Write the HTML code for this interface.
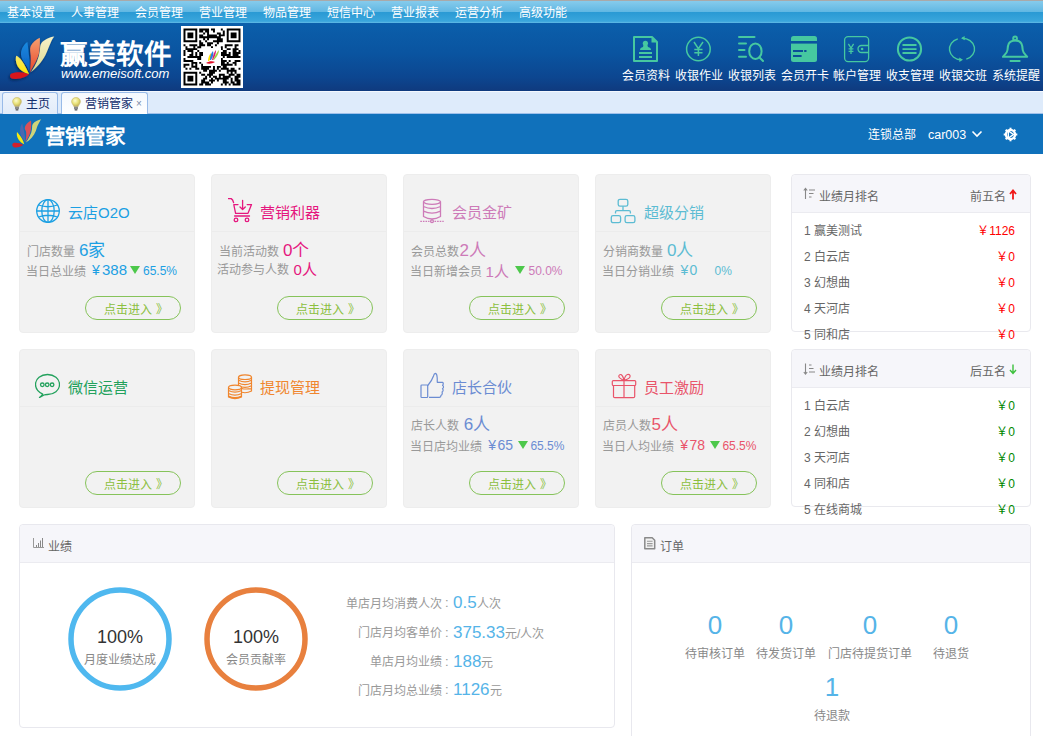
<!DOCTYPE html>
<html lang="zh-CN">
<head>
<meta charset="utf-8">
<style>
*{margin:0;padding:0;box-sizing:border-box}
html,body{width:1043px;height:736px;overflow:hidden;background:#fff;font-family:"Liberation Sans",sans-serif;position:relative}
.a{position:absolute;white-space:nowrap}
#topline{left:0;top:0;width:1043px;height:1px;background:#a9a9a9}
#nav{left:0;top:1px;width:1043px;height:22px;background:linear-gradient(#86cbec 0%,#62b8e3 48%,#2a9ad4 52%,#3aa6dc 92%,#63bce6 100%)}
#nav span{position:absolute;top:1px;line-height:22px;font-size:12px;color:#fff}
#hdr{left:0;top:23px;width:1043px;height:68px;background:linear-gradient(#0b5fab 0%,#0a54a0 45%,#0c4690 80%,#0f3a7e 100%)}
#tabs{left:0;top:91px;width:1043px;height:23px;background:#deebfb;border-top:1px solid #f4f8fe;border-bottom:1px solid #9fc0ea}
.tab{position:absolute;top:0px;height:22px;border:1px solid #99bbe8;border-bottom:none;border-radius:3px 3px 0 0;background:linear-gradient(#eef4fc,#e2ecf9)}
.tab.on{background:linear-gradient(#f4f8fe,#fff);height:23px}
.tab span{position:absolute;top:3px;line-height:16px;font-size:12px;color:#102c6c}
#bar{left:0;top:114px;width:1043px;height:40px;background:#1071bb}
.hi{position:absolute;top:0;width:53px;height:60px}
.hl{position:absolute;left:0;width:53px;text-align:center;font-size:12px;line-height:14px;top:45px;color:#fff}
.card{position:absolute;width:176px;height:159px;background:#f2f2f2;border:1px solid #ededed;border-radius:4px}
.card .sep{position:absolute;left:0;top:56px;width:174px;height:1px;background:#ececec}
.card .tt{position:absolute;left:48px;top:28px;line-height:20px;font-size:15px}
.card .ic{position:absolute;left:16px;top:24px;width:25px;height:25px}
.card .r1{position:absolute;left:8px;top:66px;line-height:20px;font-size:12px;color:#999}
.card .r2{position:absolute;left:8px;top:86px;line-height:20px;font-size:12px;color:#999}
.card i{font-style:normal;color:var(--c)}
.btn{position:absolute;left:65px;top:121px;width:96px;height:24px;border:1px solid #86c35a;border-radius:12px;font-size:12px;line-height:22px;padding-top:2px;padding-left:6px;color:#8cbf3f;text-align:center}
.rk{position:absolute;left:791px;width:240px;height:158px;border:1px solid #e9e9ee;border-radius:4px;overflow:visible;background:#fff}
.rk .h{position:absolute;left:0;top:0;width:238px;height:38px;background:#f6f6fa;border-bottom:1px solid #ebebf0;border-radius:4px 4px 0 0}
.rk .row{position:absolute;left:12px;width:211px;font-size:12px;line-height:16px;color:#666}
.rk .row b{font-weight:normal;position:absolute;right:0;top:0}
.pn{position:absolute;top:524px;border:1px solid #e8e8ee;border-radius:4px;background:#fff}
.pn .h{position:absolute;left:0;top:0;width:100%;height:38px;background:#f6f6fa;border-bottom:1px solid #ebebf0;border-radius:4px 4px 0 0}
</style>
</head>
<body>
<div class="a" id="topline"></div>
<div class="a" id="nav">
<span style="left:7px">基本设置</span>
<span style="left:71px">人事管理</span>
<span style="left:135px">会员管理</span>
<span style="left:199px">营业管理</span>
<span style="left:263px">物品管理</span>
<span style="left:327px">短信中心</span>
<span style="left:391px">营业报表</span>
<span style="left:455px">运营分析</span>
<span style="left:519px">高级功能</span>
</div>
<div class="a" id="hdr"></div>
<svg class="a" style="left:0;top:0" width="1043" height="91" viewBox="0 0 1043 91">
<defs>
<linearGradient id="gO" x1="0" y1="0" x2="0" y2="1"><stop offset="0" stop-color="#f5a070"/><stop offset="1" stop-color="#e8452a"/></linearGradient>
<linearGradient id="gB" x1="0" y1="0" x2="0" y2="1"><stop offset="0" stop-color="#1a8ae0"/><stop offset="1" stop-color="#0a5cc0"/></linearGradient>
<linearGradient id="gP" x1="0" y1="0" x2="0" y2="1"><stop offset="0" stop-color="#f6f2c8"/><stop offset="1" stop-color="#dcd890"/></linearGradient>
<linearGradient id="gY" x1="0" y1="0" x2="0" y2="1"><stop offset="0" stop-color="#f4e870"/><stop offset="1" stop-color="#ffe600"/></linearGradient>
<filter id="sh" x="-30%" y="-30%" width="160%" height="160%"><feDropShadow dx="-1" dy="1.5" stdDeviation="1.2" flood-color="#001a40" flood-opacity="0.7"/></filter>
</defs>
<g filter="url(#sh)">
<path d="M29 74.5 C25 72 17 71.5 11.5 73.5 C9.5 74.5 9.5 77.5 12 78.5 C17 80 25 77.5 29 74.5Z" fill="#d8141c"/>
<path d="M29 74 C27 70 24 63 20 58.5 C18.5 57 17 56 16.2 55.8 C15.5 58 15.5 62 17.5 66 C20 70.5 25 73 29 74Z" fill="url(#gY)"/>
<path d="M29.5 73 C29.5 68 30 62 29 56 C28.5 51 27.8 45 27.4 42 C24.5 44 21.5 48 21 53 C20.5 58 24 62 26.5 66 C28 68.5 29 71 29.5 73Z" fill="url(#gB)"/>
<path d="M30 72.5 C33 66 37.5 60 39 53 C40 47 40 41 39.8 37.8 C36 39.5 32.5 42.5 30.8 46 C29.5 49 30.5 52 30.8 56 C31 61 30.5 67 30 72.5Z" fill="url(#gO)"/>
<path d="M31 72 C36 68 42 62 45.5 55 C47.5 51 49 46 51 42 C52 39.5 53.3 37.5 54.3 36.4 C49.5 37 44 39.5 41.5 43 C40 45 40.2 48 39.8 51 C39 58 36 65 31 72Z" fill="url(#gP)"/>
</g>
<rect x="181" y="26" width="62" height="62" fill="#fff"/>
<g transform="translate(183.5 28.5) scale(1.965)"><path d="M0 0h7v1h-7zM8 0h5v1h-5zM14 0h2v1h-2zM19 0h1v1h-1zM22 0h7v1h-7zM0 1h1v1h-1zM6 1h1v1h-1zM8 1h2v1h-2zM11 1h2v1h-2zM15 1h1v1h-1zM20 1h1v1h-1zM22 1h1v1h-1zM28 1h1v1h-1zM0 2h1v1h-1zM2 2h3v1h-3zM6 2h1v1h-1zM10 2h1v1h-1zM12 2h1v1h-1zM17 2h2v1h-2zM20 2h1v1h-1zM22 2h1v1h-1zM24 2h3v1h-3zM28 2h1v1h-1zM0 3h1v1h-1zM2 3h3v1h-3zM6 3h1v1h-1zM8 3h2v1h-2zM12 3h5v1h-5zM18 3h3v1h-3zM22 3h1v1h-1zM24 3h3v1h-3zM28 3h1v1h-1zM0 4h1v1h-1zM2 4h3v1h-3zM6 4h1v1h-1zM8 4h11v1h-11zM22 4h1v1h-1zM24 4h3v1h-3zM28 4h1v1h-1zM0 5h1v1h-1zM6 5h1v1h-1zM10 5h1v1h-1zM12 5h1v1h-1zM17 5h3v1h-3zM22 5h1v1h-1zM28 5h1v1h-1zM0 6h7v1h-7zM8 6h1v1h-1zM11 6h1v1h-1zM15 6h5v1h-5zM22 6h7v1h-7zM8 7h2v1h-2zM12 7h3v1h-3zM17 7h1v1h-1zM0 8h1v1h-1zM3 8h4v1h-4zM8 8h3v1h-3zM12 8h2v1h-2zM16 8h1v1h-1zM21 8h4v1h-4zM26 8h2v1h-2zM1 9h1v1h-1zM5 9h1v1h-1zM7 9h2v1h-2zM14 9h1v1h-1zM19 9h1v1h-1zM21 9h1v1h-1zM26 9h1v1h-1zM1 10h6v1h-6zM19 10h1v1h-1zM22 10h2v1h-2zM25 10h3v1h-3zM0 11h1v1h-1zM2 11h3v1h-3zM7 11h1v1h-1zM20 11h2v1h-2zM25 11h2v1h-2zM28 11h1v1h-1zM0 12h1v1h-1zM4 12h1v1h-1zM6 12h1v1h-1zM8 12h2v1h-2zM19 12h3v1h-3zM23 12h1v1h-1zM25 12h4v1h-4zM0 13h1v1h-1zM3 13h2v1h-2zM6 13h1v1h-1zM8 13h2v1h-2zM19 13h5v1h-5zM25 13h3v1h-3zM2 14h7v1h-7zM20 14h1v1h-1zM22 14h7v1h-7zM0 15h1v1h-1zM7 15h2v1h-2zM19 15h1v1h-1zM0 16h5v1h-5zM19 16h3v1h-3zM23 16h1v1h-1zM26 16h3v1h-3zM4 17h3v1h-3zM8 17h1v1h-1zM19 17h2v1h-2zM22 17h1v1h-1zM25 17h2v1h-2zM0 18h3v1h-3zM4 18h1v1h-1zM6 18h1v1h-1zM9 18h1v1h-1zM19 18h6v1h-6zM26 18h1v1h-1zM0 19h1v1h-1zM4 19h3v1h-3zM9 19h5v1h-5zM15 19h1v1h-1zM17 19h2v1h-2zM20 19h2v1h-2zM1 20h1v1h-1zM3 20h1v1h-1zM6 20h2v1h-2zM9 20h4v1h-4zM15 20h1v1h-1zM17 20h1v1h-1zM19 20h4v1h-4zM24 20h2v1h-2zM28 20h1v1h-1zM10 21h2v1h-2zM13 21h4v1h-4zM18 21h1v1h-1zM22 21h5v1h-5zM0 22h7v1h-7zM8 22h1v1h-1zM13 22h3v1h-3zM22 22h1v1h-1zM24 22h1v1h-1zM26 22h1v1h-1zM0 23h1v1h-1zM6 23h1v1h-1zM9 23h2v1h-2zM12 23h3v1h-3zM18 23h3v1h-3zM23 23h3v1h-3zM27 23h2v1h-2zM0 24h1v1h-1zM2 24h3v1h-3zM6 24h1v1h-1zM11 24h1v1h-1zM13 24h1v1h-1zM15 24h2v1h-2zM18 24h1v1h-1zM20 24h4v1h-4zM26 24h3v1h-3zM0 25h1v1h-1zM2 25h3v1h-3zM6 25h1v1h-1zM10 25h2v1h-2zM14 25h1v1h-1zM16 25h7v1h-7zM24 25h1v1h-1zM26 25h2v1h-2zM0 26h1v1h-1zM2 26h3v1h-3zM6 26h1v1h-1zM9 26h2v1h-2zM13 26h3v1h-3zM17 26h1v1h-1zM20 26h2v1h-2zM24 26h1v1h-1zM26 26h3v1h-3zM0 27h1v1h-1zM6 27h1v1h-1zM9 27h4v1h-4zM14 27h1v1h-1zM20 27h3v1h-3zM24 27h2v1h-2zM27 27h2v1h-2zM0 28h7v1h-7zM8 28h2v1h-2zM11 28h3v1h-3zM19 28h1v1h-1zM21 28h1v1h-1zM23 28h1v1h-1zM25 28h4v1h-4z" fill="#000"/></g>
<rect x="203" y="48" width="18" height="18" fill="#fff"/>
<path d="M206 63 C209 61 213 61 215 62 C212 64 208 64 206 63Z" fill="#e0102a"/>
<path d="M208 61 C208 58 209 55 211 53 C212 56 211 59 209 61Z" fill="#ffe000"/>
<path d="M210 60 C210 56 211 53 213 51 C214 54 213 57 211 60Z" fill="#2a7ee0"/>
<path d="M212 60 C213 56 214 52 216 50 C216 53 215 57 213 60Z" fill="#e02070"/>
<path d="M213 60 C215 56 217 52 219 50 C219 53 217 57 214 60Z" fill="#a0d040"/>
<g fill="none" stroke="#46c8a0" stroke-width="2">
<path d="M634 37 H652 L657 42 V61 H634 Z" stroke-linejoin="round"/>
<path d="M639 53 H652 M639 57 H652"/>
</g>
<path d="M651.5 37 V42.5 H657 Z" fill="#46c8a0"/>
<circle cx="645.4" cy="43.3" r="2.6" fill="#46c8a0"/>
<path d="M643.5 45 H647.3 L648 47 C650 47.3 651 48.5 651 50 H640 C640 48.5 641 47.3 643 47 Z" fill="#46c8a0"/>
<circle cx="698.4" cy="49" r="11.8" fill="none" stroke="#46c8a0" stroke-width="1.5"/>
<path d="M694 42 L698.4 48.7 L703 42 M698.4 48.7 V56 M694.3 49.6 H702.5 M694.3 52.8 H702.5" fill="none" stroke="#46c8a0" stroke-width="1.5"/>
<g fill="none" stroke="#46c8a0" stroke-width="2" stroke-linecap="round">
<path d="M739 37 H754.5 M739 43.5 H746 M739 50 H744.5 M739 56.7 H746"/>
<ellipse cx="755.4" cy="51.2" rx="6.2" ry="7.8"/>
<path d="M759.8 57.8 L763 61"/>
</g>
<rect x="791" y="36" width="26" height="26" rx="2.5" fill="#46c8a0"/>
<rect x="791" y="41" width="26" height="2.6" fill="#0a549f"/>
<path d="M793 51 H803 M804.2 51 H806.5 M793 56 H801.6" stroke="#0b4f98" stroke-width="2"/>
<g fill="none" stroke="#46c8a0" stroke-width="1.3">
<rect x="844.6" y="36.6" width="24" height="25" rx="3.5"/>
<path d="M868.6 45.5 H861.5 A3.5 3.5 0 0 0 861.5 52.5 H868.6"/>
<path d="M848.4 43.8 L851 48 L853.6 43.8 M851 48 V54 M848.6 48.8 H853.4 M848.6 51.3 H853.4"/>
</g>
<circle cx="862.1" cy="49" r="1.3" fill="#46c8a0"/>
<circle cx="909.5" cy="49" r="11.6" fill="none" stroke="#46c8a0" stroke-width="2"/>
<path d="M902.5 45 H916.5 M902.5 49.1 H916.5 M902.5 53 H916.5" stroke="#46c8a0" stroke-width="1.8"/>
<g fill="none" stroke="#46c8a0" stroke-width="1.4">
<path d="M957.8 38.8 A12.3 10.8 0 0 0 961 59.8"/>
<path d="M966.3 59.2 A12.3 10.8 0 0 0 962 38.2"/>
</g>
<path d="M964.6 36 L961 38.3 L964.8 40.2 Z M959.2 57.5 L963 59.7 L959.4 62 Z" fill="#46c8a0"/>
<g fill="none" stroke="#46c8a0" stroke-width="2" stroke-linejoin="round">
<circle cx="1015.1" cy="38.4" r="1.9"/>
<path d="M1015.1 40.5 C1008 40.5 1007.8 46 1007.5 50 C1007.2 53 1004 55 1003 56.8 H1027.2 C1026 55 1023 53 1022.7 50 C1022.4 46 1022.2 40.5 1015.1 40.5 Z"/>
<path d="M1009.7 61 H1020.4"/>
</g>
</svg>
<div class="a" style="left:60px;top:38.5px;font-size:27.5px;line-height:32px;font-weight:bold;color:#fff;letter-spacing:1px">赢美软件</div>
<div class="a" style="left:61px;top:67px;font-size:13px;line-height:14px;font-style:italic;color:#fff">www.emeisoft.com</div>
<div class="a" style="left:622px;top:69px;font-size:12px;line-height:14px;color:#fff;word-spacing:0">
<span class="a" style="left:0">会员资料</span><span class="a" style="left:53px">收银作业</span><span class="a" style="left:106px">收银列表</span><span class="a" style="left:158.6px">会员开卡</span><span class="a" style="left:211.4px">帐户管理</span><span class="a" style="left:264px">收支管理</span><span class="a" style="left:316.8px">收银交班</span><span class="a" style="left:369.5px">系统提醒</span>
</div>

<div class="a" id="tabs">
<div class="tab" style="left:2px;width:56px"><svg class="a" style="left:9px;top:4px" width="10" height="14" viewBox="0 0 10 14"><defs><radialGradient id="bg1" cx="0.4" cy="0.35" r="0.6"><stop offset="0" stop-color="#fdfbd0"/><stop offset="0.6" stop-color="#e8e27a"/><stop offset="1" stop-color="#c8b860"/></radialGradient></defs><path d="M5 0.5 C2.3 0.5 0.6 2.4 0.6 4.6 C0.6 6.5 2.2 7.6 2.8 9.5 H7.2 C7.8 7.6 9.4 6.5 9.4 4.6 C9.4 2.4 7.7 0.5 5 0.5Z" fill="url(#bg1)" stroke="#c9b76a" stroke-width="0.6"/><rect x="3" y="9.6" width="4" height="2.6" fill="#8a8a8a"/><rect x="3.7" y="12.2" width="2.6" height="1.3" fill="#555"/></svg><span style="left:23px">主页</span></div>
<div class="tab on" style="left:61px;width:87px"><svg class="a" style="left:9px;top:4px" width="10" height="14" viewBox="0 0 10 14"><defs><radialGradient id="bg1" cx="0.4" cy="0.35" r="0.6"><stop offset="0" stop-color="#fdfbd0"/><stop offset="0.6" stop-color="#e8e27a"/><stop offset="1" stop-color="#c8b860"/></radialGradient></defs><path d="M5 0.5 C2.3 0.5 0.6 2.4 0.6 4.6 C0.6 6.5 2.2 7.6 2.8 9.5 H7.2 C7.8 7.6 9.4 6.5 9.4 4.6 C9.4 2.4 7.7 0.5 5 0.5Z" fill="url(#bg1)" stroke="#c9b76a" stroke-width="0.6"/><rect x="3" y="9.6" width="4" height="2.6" fill="#8a8a8a"/><rect x="3.7" y="12.2" width="2.6" height="1.3" fill="#555"/></svg><span style="left:23px">营销管家</span><span style="left:74px;color:#7a8aa8;font-size:10px">×</span></div>
</div>
<div class="a" id="bar"></div>
<svg class="a" style="left:0;top:114px" width="60" height="40" viewBox="0 114 60 40">
<path d="M23.2 145 C20 143 15 142.3 13 143.3 C11.8 144.2 12 146.5 13.8 147.2 C17 148 21 146.8 23.2 145Z" fill="#d21f2c"/>
<path d="M24.2 144.2 C23.5 141 21.5 137.5 19.5 135 C18.5 133.8 17.5 132.5 17 132 C16.5 134 16.8 137 18.5 139.5 C20 141.8 22.3 143.5 24.2 144.2Z" fill="#f4ea10"/>
<path d="M25 141.5 C25.2 138 24.8 134 23.8 130 C23.2 127 22.5 124.5 22.2 123.3 C21 125 20 128 20 131 C20 135 22.5 138.5 25 141.5Z" fill="#4a68b0"/>
<path d="M25.4 142 C27.5 139 30 135 30.8 130 C31.3 126 31.2 122.5 31 120.4 C29 121.5 26.5 123.5 25.3 126 C24.3 128 24.8 129.5 25.8 131 C26.5 133 26.5 137 25.4 142Z" fill="#da5058"/>
<path d="M25.8 142.6 C30 140 34 136 35.8 131 C36.8 128 37.2 126 38.2 124.5 C39.2 122.5 40.2 120.5 41.2 119.2 C38 119.8 34.5 121.5 32.8 124 C31.8 125.5 32.3 127 32 129 C31.5 133.5 29 138 25.8 142.6Z" fill="#cfd47a"/>
</svg>
<div class="a" style="left:45px;top:122.5px;font-size:20.5px;line-height:28px;font-weight:bold;color:#fff">营销管家</div>
<div class="a" style="left:868px;top:127px;font-size:12px;line-height:16px;color:#fff">连锁总部</div>
<div class="a" style="left:928px;top:126.5px;font-size:12.5px;line-height:16px;color:#fff">car003</div>
<svg class="a" style="left:970px;top:128.5px" width="14" height="10" viewBox="0 0 14 10"><path d="M2.5 2.5 L7 7 L11.5 2.5" fill="none" stroke="#fff" stroke-width="1.6"/></svg>
<svg class="a" style="left:1002px;top:126px" width="17" height="17" viewBox="-8.5 -8.5 17 17"><g fill="#fff"><rect x="-1" y="-6.8" width="2" height="13.6"/><rect x="-1" y="-6.8" width="2" height="13.6" transform="rotate(45)"/><rect x="-1" y="-6.8" width="2" height="13.6" transform="rotate(90)"/><rect x="-1" y="-6.8" width="2" height="13.6" transform="rotate(135)"/></g><circle r="4.6" fill="#1071bb" stroke="#fff" stroke-width="2.2"/><path d="M-2.2 -3.6 L3 0 L-2.2 3.6 Z" fill="none" stroke="#fff" stroke-width="1.4"/></svg>

<div class="card" style="left:19px;top:174px;--c:#1ca0e3"><div class="sep"></div><svg class="ic globe" width="24" height="24" viewBox="0 0 24 24" style="left:16px;top:24px;width:24px;height:24px"><g fill="none" stroke="#1ca0e3" stroke-width="1.3"><circle cx="12" cy="12" r="11.3"/><ellipse cx="12" cy="12" rx="6.2" ry="11.3"/><path d="M12 0.7V23.3 M0.7 12H23.3 M2.5 6 Q12 9.5 21.5 6 M2.5 18 Q12 14.5 21.5 18"/></g></svg><div class="tt" style="color:#1ca0e3">云店O2O</div><div class="btn">点击进入 》</div></div>
<div class="card" style="left:211px;top:174px;--c:#e5177e"><div class="sep"></div><svg class="ic cart" width="30" height="30" viewBox="0 0 30 30" style="left:16px;top:23px;width:30px;height:30px"><g fill="none" stroke="#e5177e" stroke-width="1.3" stroke-linecap="round" stroke-linejoin="round"><path d="M0.3 0.5H3 Q4.8 1 5.6 4.7"/><path d="M10 6.6H5.8 L7.6 15.3 H20 L23.5 6.6 H19.2"/><path d="M6.6 18H21.5"/><circle cx="8" cy="21.9" r="1.8"/><circle cx="19" cy="21.9" r="1.8"/><path d="M14.6 2.3V11.3 M12 9 L14.6 11.5 L17.3 9"/></g></svg><div class="tt" style="color:#e5177e">营销利器</div><div class="btn">点击进入 》</div></div>
<div class="card" style="left:403px;top:174px;--c:#cd7ab8"><div class="sep"></div><svg class="ic db" width="30" height="30" viewBox="0 0 30 30" style="left:13px;top:21px;width:30px;height:30px"><g fill="none" stroke="#cd7ab8" stroke-width="1.3"><ellipse cx="15" cy="5.8" rx="8.5" ry="2.5"/><path d="M6.5 5.8V20.5 Q15 25.5 23.5 20.5 V5.8 M6.5 10.5 Q15 14.5 23.5 10.5 M6.5 15.2 Q15 19.2 23.5 15.2 M15 22.8V24"/><circle cx="15" cy="25.3" r="1.4"/></g><path d="M3.3 25.3H12.5 M17.5 25.3H26.7" stroke="#cd7ab8" stroke-width="1.3" stroke-dasharray="1.6 1"/></svg><div class="tt" style="color:#cd7ab8">会员金矿</div><div class="btn">点击进入 》</div></div>
<div class="card" style="left:595px;top:174px;--c:#5cbcd3"><div class="sep"></div><svg class="ic org" width="30" height="30" viewBox="0 0 30 30" style="left:12px;top:21px;width:30px;height:30px"><g fill="none" stroke="#5cbcd3" stroke-width="1.3"><rect x="10.2" y="3.3" width="9.6" height="6.9" rx="1.8"/><path d="M15 10.2V14.3 M7.5 17.5V16 Q7.5 14.6 9 14.6 H21 Q22.4 14.6 22.4 16 V17.5"/><rect x="3.3" y="19.6" width="9.3" height="7.1" rx="1.8"/><rect x="17.1" y="19.6" width="9.8" height="7.1" rx="1.8"/></g></svg><div class="tt" style="color:#5cbcd3">超级分销</div><div class="btn">点击进入 》</div></div>
<div class="card" style="left:19px;top:349px;--c:#22a15c"><div class="sep"></div><svg class="ic chat" width="25" height="25" viewBox="0 0 25 25" style="left:15px;top:23px;width:25px;height:25px"><g fill="none" stroke="#22a15c" stroke-width="1.3" stroke-linejoin="round"><path d="M7.7 21.2 C3.5 19 0.5 15.5 0.5 11.5 C0.5 5.5 6 1.5 12.5 1.5 C19 1.5 24.5 5.5 24.5 11.5 C24.5 17.5 19 21.5 12.5 21.5 C11 21.5 10 21.6 9 22 L4.5 24.5 C6 23 7.5 22 7.7 21.2Z"/></g><circle cx="7.3" cy="11.8" r="1.8" fill="none" stroke="#22a15c" stroke-width="1.3"/><circle cx="12.2" cy="11.8" r="1.8" fill="none" stroke="#22a15c" stroke-width="1.3"/><circle cx="17.1" cy="11.8" r="1.8" fill="none" stroke="#22a15c" stroke-width="1.3"/></svg><div class="tt" style="color:#22a15c">微信运营</div><div class="btn">点击进入 》</div></div>
<div class="card" style="left:211px;top:349px;--c:#f0862e"><div class="sep"></div><svg class="ic coins" width="30" height="30" viewBox="0 0 30 30" style="left:12.5px;top:22px;width:30px;height:30px"><g fill="none" stroke="#f0862e" stroke-width="1.2"><ellipse cx="20" cy="5.2" rx="6.5" ry="2.3"/><path d="M13.5 5.2V19 Q20 22.5 26.5 19 V5.2 M13.5 8.2Q20 11.5 26.5 8.2 M13.5 11Q20 14.3 26.5 11 M13.5 13.8Q20 17.1 26.5 13.8 M16.9 16.5Q20 17.5 26.5 16.6"/><path d="M3.5 15.5V25 Q10 28.5 16.5 25 V15.5 A6.5 2.3 0 0 0 3.5 15.5Z" fill="#f2f2f2" stroke="none"/><ellipse cx="10" cy="15.5" rx="6.5" ry="2.3"/><path d="M3.5 15.5V25 Q10 28.5 16.5 25 V15.5 M3.5 18.5Q10 21.8 16.5 18.5 M3.5 21.5Q10 24.8 16.5 21.5 M3.5 24Q10 27.3 16.5 24"/></g></svg><div class="tt" style="color:#f0862e">提现管理</div><div class="btn">点击进入 》</div></div>
<div class="card" style="left:403px;top:349px;--c:#6b8cd2"><div class="sep"></div><svg class="ic thumb" width="30" height="30" viewBox="0 0 30 30" style="left:13.4px;top:20.3px;width:30px;height:30px"><g fill="none" stroke="#6b8cd2" stroke-width="1.2" stroke-linejoin="round"><rect x="4" y="15" width="6.7" height="12.5" rx="0.8"/><path d="M10.8 15.5 C13 13 15.5 9 16.5 6 C17 4 17 3.5 18.5 3.3 C20 3.5 20 5 20.2 8 C20.3 10 20.2 12 20.3 12.3 H25.5 C26.5 12.5 26.5 14.5 25.6 15.5 C26.8 16 26.8 18 25.5 18.8 C26.5 19.5 26.3 21.5 25 22 C25.6 22.8 25.3 25 24 25.3 C24 26.5 23.5 27.3 22.5 27.3 H12"/></g></svg><div class="tt" style="color:#6b8cd2">店长合伙</div><div class="btn">点击进入 》</div></div>
<div class="card" style="left:595px;top:349px;--c:#e9546a"><div class="sep"></div><svg class="ic gift" width="30" height="30" viewBox="0 0 30 30" style="left:12.7px;top:21px;width:30px;height:30px"><g fill="none" stroke="#e9546a" stroke-width="1.2" stroke-linejoin="round"><rect x="3.3" y="9.6" width="23.4" height="4.9" rx="1"/><path d="M4.5 14.5V25.5 Q4.5 26.7 5.7 26.7 H24.3 Q25.7 26.7 25.7 25.5 V14.5 M15 9.6V26.7"/><path d="M15 9.4 C13 8.5 10 7 9.8 5.5 C9.7 4 11 3.3 12 3.6 C13.5 4.2 14.5 7 15 9.4 C15.5 7 17 4 18.5 3.5 C20 3 21.5 4 21 5.8 C20.5 7.5 17 8.7 15 9.4Z"/></g></svg><div class="tt" style="color:#e9546a">员工激励</div><div class="btn">点击进入 》</div></div>
<span class="a t" style="left:27px;top:241.5px;font-size:12px;line-height:20px;color:#999">门店数量</span>
<span class="a t" style="left:79px;top:240.5px;font-size:17px;line-height:20px;color:#1ca0e3">6家</span>
<span class="a t" style="left:26px;top:261.5px;font-size:12px;line-height:20px;color:#999">当日总业绩</span>
<span class="a t" style="left:92px;top:259.5px;font-size:14px;line-height:20px;color:#1ca0e3">¥</span>
<span class="a t" style="left:102px;top:259.5px;font-size:15px;line-height:20px;color:#1ca0e3">388</span>
<svg class="a" style="left:130px;top:266px" width="10" height="8" viewBox="0 0 10 8"><path d="M0 0H10L5 8Z" fill="#4dc84b"/></svg>
<span class="a t" style="left:143px;top:260.5px;font-size:12px;line-height:20px;color:#1ca0e3">65.5%</span>
<span class="a t" style="left:219px;top:242.0px;font-size:12px;line-height:20px;color:#999">当前活动数</span>
<span class="a t" style="left:283px;top:241.0px;font-size:17px;line-height:20px;color:#e5177e">0个</span>
<span class="a t" style="left:217px;top:259.8px;font-size:12px;line-height:20px;color:#999">活动参与人数</span>
<span class="a t" style="left:293.5px;top:259.8px;font-size:15px;line-height:20px;color:#e5177e">0人</span>
<span class="a t" style="left:410.6px;top:241.5px;font-size:12px;line-height:20px;color:#999">会员总数</span>
<span class="a t" style="left:459.5px;top:240.5px;font-size:17px;line-height:20px;color:#cd7ab8">2人</span>
<span class="a t" style="left:410px;top:261.5px;font-size:12px;line-height:20px;color:#999">当日新增会员</span>
<span class="a t" style="left:485.5px;top:261.5px;font-size:15px;line-height:20px;color:#cd7ab8">1人</span>
<svg class="a" style="left:514.6px;top:266px" width="10" height="8" viewBox="0 0 10 8"><path d="M0 0H10L5 8Z" fill="#4dc84b"/></svg>
<span class="a t" style="left:528.5px;top:260.5px;font-size:12px;line-height:20px;color:#cd7ab8">50.0%</span>
<span class="a t" style="left:603px;top:241.5px;font-size:12px;line-height:20px;color:#999">分销商数量</span>
<span class="a t" style="left:667px;top:240.5px;font-size:17px;line-height:20px;color:#5cbcd3">0人</span>
<span class="a t" style="left:602px;top:261.5px;font-size:12px;line-height:20px;color:#999">当日分销业绩</span>
<span class="a t" style="left:680.4px;top:259.5px;font-size:14px;line-height:20px;color:#5cbcd3">¥</span>
<span class="a t" style="left:689.5px;top:259.5px;font-size:14px;line-height:20px;color:#5cbcd3">0</span>
<span class="a t" style="left:714.5px;top:260.5px;font-size:12px;line-height:20px;color:#5cbcd3">0%</span>
<span class="a t" style="left:410.6px;top:416.0px;font-size:12px;line-height:20px;color:#999">店长人数</span>
<span class="a t" style="left:463.8px;top:415.0px;font-size:17px;line-height:20px;color:#6b8cd2">6人</span>
<span class="a t" style="left:409.8px;top:436.8px;font-size:12px;line-height:20px;color:#999">当日店均业绩</span>
<span class="a t" style="left:488.2px;top:434.8px;font-size:14px;line-height:20px;color:#6b8cd2">¥</span>
<span class="a t" style="left:497.5px;top:434.8px;font-size:14px;line-height:20px;color:#6b8cd2">65</span>
<svg class="a" style="left:518.3px;top:441.3px" width="10" height="8" viewBox="0 0 10 8"><path d="M0 0H10L5 8Z" fill="#4dc84b"/></svg>
<span class="a t" style="left:530.4px;top:435.8px;font-size:12px;line-height:20px;color:#6b8cd2">65.5%</span>
<span class="a t" style="left:602.6px;top:416.0px;font-size:12px;line-height:20px;color:#999">店员人数</span>
<span class="a t" style="left:651.5px;top:415.0px;font-size:17px;line-height:20px;color:#e9546a">5人</span>
<span class="a t" style="left:602px;top:436.8px;font-size:12px;line-height:20px;color:#999">当日人均业绩</span>
<span class="a t" style="left:680.2px;top:434.8px;font-size:14px;line-height:20px;color:#e9546a">¥</span>
<span class="a t" style="left:689.5px;top:434.8px;font-size:14px;line-height:20px;color:#e9546a">78</span>
<svg class="a" style="left:710px;top:441.3px" width="10" height="8" viewBox="0 0 10 8"><path d="M0 0H10L5 8Z" fill="#4dc84b"/></svg>
<span class="a t" style="left:722.4px;top:435.8px;font-size:12px;line-height:20px;color:#e9546a">65.5%</span>
<div class="rk" style="top:174px"><div class="h"><svg width="14" height="14" viewBox="0 0 14 14" style="position:absolute;left:11px;top:12px"><path d="M2.5 1.5V12 M0.8 3.5 L2.5 1.3 L4.2 3.5" fill="none" stroke="#888" stroke-width="1.1"/><path d="M6 3H12 M6 6.5H10.5 M6 10H8.5" stroke="#888" stroke-width="1.1"/></svg><span class="a" style="left:27px;top:13.5px;font-size:12px;line-height:16px;color:#666">业绩月排名</span><span class="a" style="left:178px;top:13.5px;font-size:12px;line-height:16px;color:#666">前五名</span><svg width="8" height="11" viewBox="0 0 8 11" style="position:absolute;left:217px;top:14px"><path d="M4 10.5V2 M1 5 L4 1.5 L7 5" fill="none" stroke="#f01818" stroke-width="1.8"/></svg></div><div class="row" style="top:48px">1 赢美测试<b style="color:#f00">￥1126</b></div><div class="row" style="top:74px">2 白云店<b style="color:#f00">￥0</b></div><div class="row" style="top:100px">3 幻想曲<b style="color:#f00">￥0</b></div><div class="row" style="top:126px">4 天河店<b style="color:#f00">￥0</b></div><div class="row" style="top:152px">5 同和店<b style="color:#f00">￥0</b></div></div>
<div class="rk" style="top:349px"><div class="h"><svg width="14" height="14" viewBox="0 0 14 14" style="position:absolute;left:11px;top:12px"><path d="M2.5 1.5V12 M0.8 10 L2.5 12.2 L4.2 10" fill="none" stroke="#888" stroke-width="1.1"/><path d="M6 3H8.5 M6 6.5H10.5 M6 10H12" stroke="#888" stroke-width="1.1"/></svg><span class="a" style="left:27px;top:13.5px;font-size:12px;line-height:16px;color:#666">业绩月排名</span><span class="a" style="left:178px;top:13.5px;font-size:12px;line-height:16px;color:#666">后五名</span><svg width="8" height="11" viewBox="0 0 8 11" style="position:absolute;left:217px;top:14px"><path d="M4 0.5V9 M1 6 L4 9.5 L7 6" fill="none" stroke="#3cc03c" stroke-width="1.4"/></svg></div><div class="row" style="top:48px">1 白云店<b style="color:#080">￥0</b></div><div class="row" style="top:74px">2 幻想曲<b style="color:#080">￥0</b></div><div class="row" style="top:100px">3 天河店<b style="color:#080">￥0</b></div><div class="row" style="top:126px">4 同和店<b style="color:#080">￥0</b></div><div class="row" style="top:152px">5 在线商城<b style="color:#080">￥0</b></div></div>
<div class="pn" style="left:19px;width:596px;height:204px"><div class="h"><svg width="12" height="11" viewBox="0 0 12 11" style="position:absolute;left:13px;top:13px"><path d="M0.5 0V9.5H11" fill="none" stroke="#999" stroke-width="1"/><path d="M3.5 9V7 M5.5 9V5 M7.5 9V2.5 M9.5 9V0" stroke="#888" stroke-width="1"/></svg><span class="a" style="left:28px;top:13.5px;font-size:12px;line-height:16px;color:#666">业绩</span></div>
<svg class="a" style="left:48px;top:44px" width="250" height="130" viewBox="0 0 250 130"><circle cx="52" cy="70" r="49" fill="none" stroke="#4fb8ef" stroke-width="5.5"/><circle cx="188" cy="70" r="49" fill="none" stroke="#e8803e" stroke-width="5.5"/></svg>
<div class="a" style="left:50px;top:101.5px;width:100px;text-align:center;font-size:18px;line-height:20px;color:#333">100%</div>
<div class="a" style="left:50px;top:127px;width:100px;text-align:center;font-size:12px;line-height:16px;color:#888">月度业绩达成</div>
<div class="a" style="left:186px;top:101.5px;width:100px;text-align:center;font-size:18px;line-height:20px;color:#333">100%</div>
<div class="a" style="left:186px;top:127px;width:100px;text-align:center;font-size:12px;line-height:16px;color:#888">会员贡献率</div>
<div class="a" style="left:272px;top:68.5px;width:150px;text-align:right;font-size:12px;line-height:20px;color:#999">单店月均消费人次</div><div class="a" style="left:425px;top:68px;font-size:13px;line-height:20px;color:#999">:</div><div class="a" style="left:433px;top:67px;font-size:17px;line-height:22px;color:#55b4e8">0.5<span style="font-size:12px;color:#999">人次</span></div>
<div class="a" style="left:272px;top:98.29999999999995px;width:150px;text-align:right;font-size:12px;line-height:20px;color:#999">门店月均客单价</div><div class="a" style="left:425px;top:97.79999999999995px;font-size:13px;line-height:20px;color:#999">:</div><div class="a" style="left:433px;top:96.79999999999995px;font-size:17px;line-height:22px;color:#55b4e8">375.33<span style="font-size:12px;color:#999">元/人次</span></div>
<div class="a" style="left:272px;top:127.0px;width:150px;text-align:right;font-size:12px;line-height:20px;color:#999">单店月均业绩</div><div class="a" style="left:425px;top:126.5px;font-size:13px;line-height:20px;color:#999">:</div><div class="a" style="left:433px;top:125.5px;font-size:17px;line-height:22px;color:#55b4e8">188<span style="font-size:12px;color:#999">元</span></div>
<div class="a" style="left:272px;top:155.5px;width:150px;text-align:right;font-size:12px;line-height:20px;color:#999">门店月均总业绩</div><div class="a" style="left:425px;top:155px;font-size:13px;line-height:20px;color:#999">:</div><div class="a" style="left:433px;top:154px;font-size:17px;line-height:22px;color:#55b4e8">1126<span style="font-size:12px;color:#999">元</span></div>

</div>
<div class="pn" style="left:631px;width:400px;height:230px"><div class="h"><svg width="12" height="13" viewBox="0 0 12 13" style="position:absolute;left:12px;top:12px"><path d="M0.8 0.8H8.2L10.7 3.3V11.7H0.8Z" fill="#f2f2f2" stroke="#8a8a8a" stroke-width="1.5" stroke-linejoin="round"/><path d="M3 4.3H8.6 M3 6.6H8.6 M3 8.9H8.6" stroke="#9a9a9a" stroke-width="1.1"/></svg><span class="a" style="left:28px;top:13.5px;font-size:12px;line-height:16px;color:#666">订单</span></div>
<div class="a" style="left:33px;top:85px;width:100px;text-align:center;font-size:26px;line-height:30px;color:#55b4e8">0</div><div class="a" style="left:23px;top:121px;width:120px;text-align:center;font-size:12px;line-height:16px;color:#888">待审核订单</div><div class="a" style="left:104px;top:85px;width:100px;text-align:center;font-size:26px;line-height:30px;color:#55b4e8">0</div><div class="a" style="left:94px;top:121px;width:120px;text-align:center;font-size:12px;line-height:16px;color:#888">待发货订单</div><div class="a" style="left:188px;top:85px;width:100px;text-align:center;font-size:26px;line-height:30px;color:#55b4e8">0</div><div class="a" style="left:178px;top:121px;width:120px;text-align:center;font-size:12px;line-height:16px;color:#888">门店待提货订单</div><div class="a" style="left:269px;top:85px;width:100px;text-align:center;font-size:26px;line-height:30px;color:#55b4e8">0</div><div class="a" style="left:259px;top:121px;width:120px;text-align:center;font-size:12px;line-height:16px;color:#888">待退货</div><div class="a" style="left:150px;top:147px;width:100px;text-align:center;font-size:26px;line-height:30px;color:#55b4e8">1</div><div class="a" style="left:140px;top:183px;width:120px;text-align:center;font-size:12px;line-height:16px;color:#888">待退款</div>
</div>
</body>
</html>
